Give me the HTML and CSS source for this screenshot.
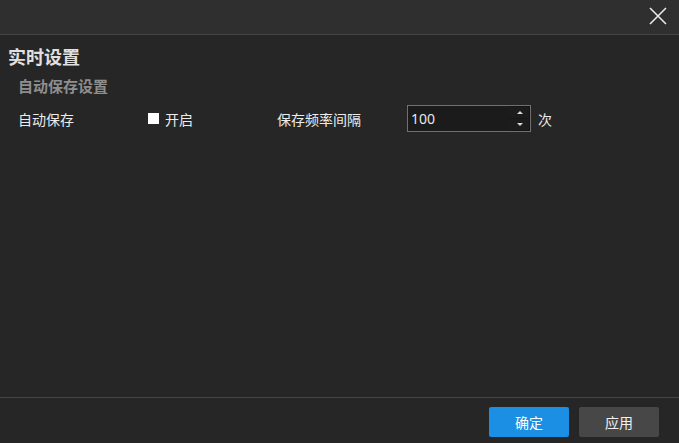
FILE: index.html
```html
<!DOCTYPE html>
<html>
<head>
<meta charset="utf-8">
<link rel="stylesheet" href="styles.css">
</head>
<body>
<div class="dialog">
  <div class="titlebar">
    <button class="close" aria-label="关闭">
      <svg width="18" height="18" viewBox="0 0 18 18"><path d="M1 1 L17 17 M17 1 L1 17" stroke="#e8e8e8" stroke-width="1.6" fill="none"/></svg>
    </button>
  </div>
  <div class="content">
    <h1 class="title">实时设置</h1>
    <h2 class="subtitle">自动保存设置</h2>
    <div class="row">
      <span class="label">自动保存</span>
      <label class="check"><span class="box"></span><span>开启</span></label>
      <span class="label">保存频率间隔</span>
      <div class="spin">
        <span class="value">100</span>
        <div class="arrows">
          <span class="arrow up"></span>
          <span class="arrow down"></span>
        </div>
      </div>
      <span class="unit">次</span>
    </div>
  </div>
  <div class="footer">
    <button class="btn primary">确定</button>
    <button class="btn">应用</button>
  </div>
</div>
</body>
</html>
```
FILE: styles.css
```css
* { box-sizing: border-box; }
html, body { margin: 0; padding: 0; }
body {
  width: 679px;
  height: 443px;
  background: #262626;
  font-family: "Noto Sans CJK SC", "Noto Sans", sans-serif;
  color: #e6e6e6;
  overflow: hidden;
}
.dialog {
  display: flex;
  flex-direction: column;
  height: 443px;
}
.titlebar {
  height: 35px;
  background: #2f2f2f;
  border-bottom: 1px solid #454545;
  display: flex;
  justify-content: flex-end;
  align-items: flex-start;
  padding: 7px 12px 0 0;
}
.close {
  background: none;
  border: 0;
  padding: 0;
  width: 18px;
  height: 18px;
  display: block;
}
.close svg { display: block; }
.content {
  flex: 1;
  padding: 9px 0 0 8px;
}
.title {
  margin: 0;
  font-size: 18px;
  line-height: 24px;
  font-weight: bold;
  color: #e0e0e0;
}
.subtitle {
  margin: 8px 0 0 10px;
  font-size: 15px;
  line-height: 20px;
  font-weight: bold;
  color: #8e8e8e;
}
.row {
  margin-top: 9px;
  padding-left: 10px;
  display: flex;
  align-items: center;
  font-size: 14px;
  height: 27px;
}
.label { width: 130px; color: #ececec; }
.check {
  width: 129px;
  display: flex;
  align-items: center;
  gap: 6px;
  color: #ececec;
}
.box {
  width: 11px;
  height: 11px;
  background: #ffffff;
  display: block;
}
.spin {
  width: 124px;
  height: 27px;
  border: 1px solid #707070;
  background: #1b1b1b;
  display: flex;
  align-items: stretch;
}
.value {
  flex: 1;
  padding-left: 3px;
  font-size: 14px;
  line-height: 25px;
  color: #e8e8e8;
  font-family: "Noto Sans", "Noto Sans CJK SC", sans-serif;
}
.arrows {
  width: 20px;
  display: flex;
  flex-direction: column;
  background: #141414;
  gap: 1px;
  padding: 1px 1px 1px 0;
}
.arrow {
  flex: 1;
  background: #1c1c1c;
  display: flex;
  align-items: center;
  justify-content: center;
}
.arrow::after {
  content: "";
  width: 0;
  height: 0;
  border-left: 3px solid transparent;
  border-right: 3px solid transparent;
}
.up::after { border-bottom: 3px solid #d8d8d8; }
.down::after { border-top: 3px solid #d8d8d8; }
.unit { margin-left: 7px; color: #ececec; }
.footer {
  border-top: 1px solid #454545;
  padding: 9px 20px 6px 0;
  display: flex;
  justify-content: flex-end;
  gap: 10px;
}
.btn {
  width: 80px;
  height: 30px;
  border: 0;
  border-radius: 2px;
  background: #474747;
  color: #f0f0f0;
  font-family: "Noto Sans CJK SC", sans-serif;
  font-size: 14px;
  padding: 0;
}
.btn.primary { background: #1a8fe3; color: #ffffff; }
```
